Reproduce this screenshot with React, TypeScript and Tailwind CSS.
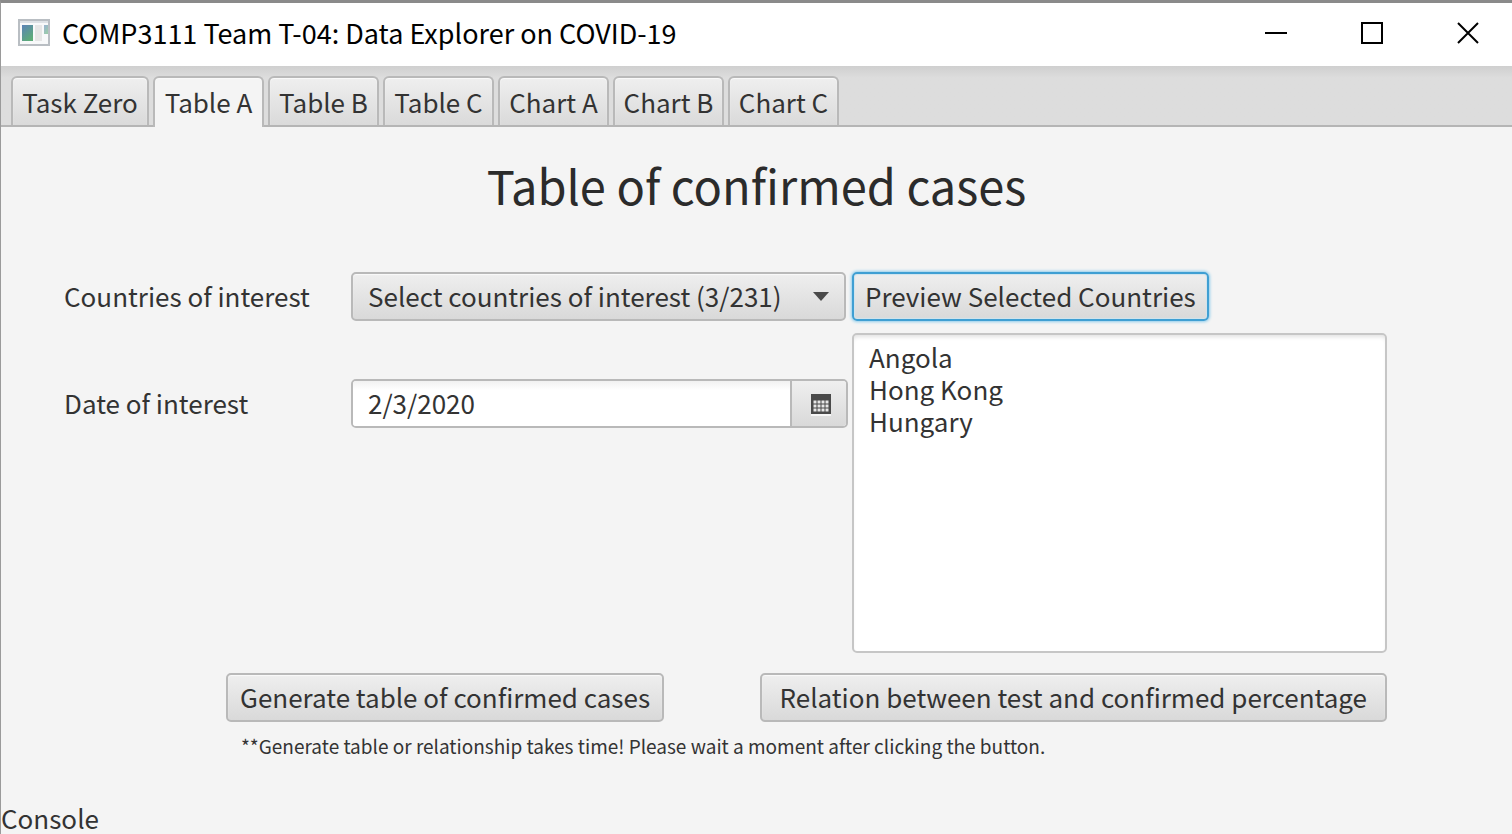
import { useState } from "react";

const tabs = ["Task Zero", "Table A", "Table B", "Table C", "Chart A", "Chart B", "Chart C"];

const buttonStyle =
    "h-[49px] rounded-[5px] border-2 border-[#b9b9b9] bg-linear-to-b from-[#efefef] to-[#d9d9d9] pb-0.5 whitespace-nowrap shadow-[inset_0_1px_1px_#fafafa]";

function AppIcon() {
    return (
        <svg width="32" height="28" viewBox="0 0 32 28" aria-hidden="true">
            <defs>
                <linearGradient id="screen" x1="0" y1="0" x2="0.6" y2="1">
                    <stop offset="0" stopColor="#5b82b8" />
                    <stop offset="1" stopColor="#5dac78" />
                </linearGradient>
            </defs>
            <rect x="1" y="1" width="30" height="25" fill="#f8f9fa" stroke="#b9bec3" strokeWidth="2" />
            <rect x="2" y="2" width="28" height="2" fill="#dde1e5" />
            <rect x="4" y="6" width="11" height="16" fill="url(#screen)" />
            <rect x="17" y="6" width="7" height="16" fill="#e6e6e6" />
            <rect x="26" y="6" width="4" height="9" fill="url(#screen)" opacity="0.6" />
        </svg>
    );
}

function CalendarIcon() {
    return (
        <svg width="20" height="22" viewBox="0 0 20 22" aria-hidden="true">
            <rect y="20" width="20" height="2" fill="#f6f6f6" />
            <rect width="20" height="20" fill="#4a4a4a" />
            {[6, 10, 14].map((y) =>
                [2, 6, 10, 14].map((x) => (
                    <rect key={`${x}-${y}`} x={x + 0.5} y={y + 0.5} width="3" height="3" fill="#e6e6e6" />
                ))
            )}
        </svg>
    );
}

function TitleBar() {
    return (
        <header className="flex h-[63px] items-center bg-white pb-1 pl-[17px] text-black">
            <AppIcon />
            <span className="ml-3 flex-1 text-[27px]">COMP3111 Team T-04: Data Explorer on COVID-19</span>
            <button aria-label="Minimize" className="flex h-full w-24 items-center justify-center pl-2">
                <svg width="22" height="22" viewBox="0 0 22 22" stroke="#000" strokeWidth="2">
                    <path d="M0 11H22" />
                </svg>
            </button>
            <button aria-label="Maximize" className="flex h-full w-24 items-center justify-center pl-2">
                <svg width="22" height="22" viewBox="0 0 22 22" fill="none" stroke="#000" strokeWidth="2">
                    <rect x="1" y="1" width="20" height="20" />
                </svg>
            </button>
            <button aria-label="Close" className="flex h-full w-24 items-center justify-center pl-2">
                <svg width="22" height="22" viewBox="0 0 22 22" stroke="#000" strokeWidth="2">
                    <path d="M1 1L21 21M21 1L1 21" />
                </svg>
            </button>
        </header>
    );
}

interface TabBarProps {
    active: string
    onSelect: (tab: string) => void
}

function TabBar(props: TabBarProps) {
    return (
        <nav role="tablist" className="flex h-[61px] items-end gap-1 border-b-2 border-[#b5b5b5] bg-linear-to-b from-[#cfcfcf] to-[#dddddd] to-20% pl-2.5">
            {tabs.map((tab, index) => (
                <button
                    key={tab}
                    role="tab"
                    aria-selected={tab === props.active}
                    onClick={() => props.onSelect(tab)}
                    className={`rounded-t-md border-2 border-b-0 border-[#b9b9b9] whitespace-nowrap shadow-[inset_0_1px_1px_#fafafa] ${index === 0 ? "w-[138px]" : "w-[111px]"} ${tab === props.active ? "-mb-0.5 h-[51px] bg-[#f4f4f4] pb-0.5" : "h-[49px] bg-linear-to-b from-[#efefef] to-[#dadada]"}`}
                >
                    {tab}
                </button>
            ))}
        </nav>
    );
}

export default function App() {
    const [active, setActive] = useState("Table A");
    const [date, setDate] = useState("2/3/2020");

    return (
        <div className="flex min-h-screen flex-col border-t-3 border-l border-t-[#8a8a8a] border-l-[#9a9a9a] bg-[#f4f4f4] font-['Noto_Sans_CJK_TC',sans-serif] text-[26px] leading-8 text-[#333333]">
            <TitleBar />
            <TabBar active={active} onSelect={setActive} />
            <main className="flex flex-1 flex-col">
                <h1 className="mt-[30px] text-center text-[47px] leading-[56px] text-[#2b2b2b]">Table of confirmed cases</h1>
                <div className="mt-[59px] mr-[125px] ml-[63px] grid grid-cols-[281fr_495fr_535fr] gap-x-1.5 gap-y-3">
                    <label htmlFor="countries" className="self-center pb-0.5">Countries of interest</label>
                    <div className="relative">
                        <select id="countries" className={`${buttonStyle} w-full appearance-none pr-12 pl-[15px]`}>
                            <option>Select countries of interest (3/231)</option>
                        </select>
                        <svg className="pointer-events-none absolute top-5 right-4" width="18" height="10" viewBox="0 0 18 10" aria-hidden="true">
                            <path d="M1 0H17L9 9Z" fill="#4a4a4a" />
                        </svg>
                    </div>
                    <button className="h-[49px] justify-self-start rounded-[5px] border-2 border-[#3f9fd3] bg-linear-to-b from-[#efefef] to-[#d9d9d9] px-[11px] pb-0.5 whitespace-nowrap shadow-[0_0_3px_1px_#8fcdec,inset_0_0_1px_1px_#cfe4ee]">
                        Preview Selected Countries
                    </button>
                    <label htmlFor="date" className="mt-[46px] flex h-[49px] items-center self-start pb-0.5">Date of interest</label>
                    <div className="mt-[46px] -mr-0.5 flex h-[49px] self-start overflow-hidden rounded-[5px] border-2 border-[#b9b9b9] bg-white">
                        <input
                            id="date"
                            type="text"
                            value={date}
                            onChange={(e) => setDate(e.target.value)}
                            className="min-w-0 flex-1 bg-linear-to-b from-[#f1f1f1] to-white to-20% px-[15px] pb-0.5 outline-none"
                        />
                        <button aria-label="Open calendar" className="flex w-14 items-center justify-center border-l-2 border-[#b9b9b9] bg-linear-to-b from-[#efefef] to-[#d9d9d9] pt-0.5 pl-1">
                            <CalendarIcon />
                        </button>
                    </div>
                    <textarea
                        readOnly
                        aria-label="Selected countries"
                        value={"Angola\nHong Kong\nHungary"}
                        className="h-80 w-full resize-none rounded-[5px] border-2 border-[#c6c6c6] bg-white px-[15px] py-1.5 shadow-[inset_0_4px_4px_-2px_#e2e2e2] outline-none"
                    />
                </div>
                <div className="mt-5 mr-[125px] ml-[225px] flex justify-between">
                    <button className={`${buttonStyle} px-3`}>Generate table of confirmed cases</button>
                    <button className={`${buttonStyle} px-[18px]`}>Relation between test and confirmed percentage</button>
                </div>
                <p className="mt-2 ml-60 text-[19px]">**Generate table or relationship takes time! Please wait a moment after clicking the button.</p>
                <p className="mt-auto">Console</p>
            </main>
        </div>
    );
}
